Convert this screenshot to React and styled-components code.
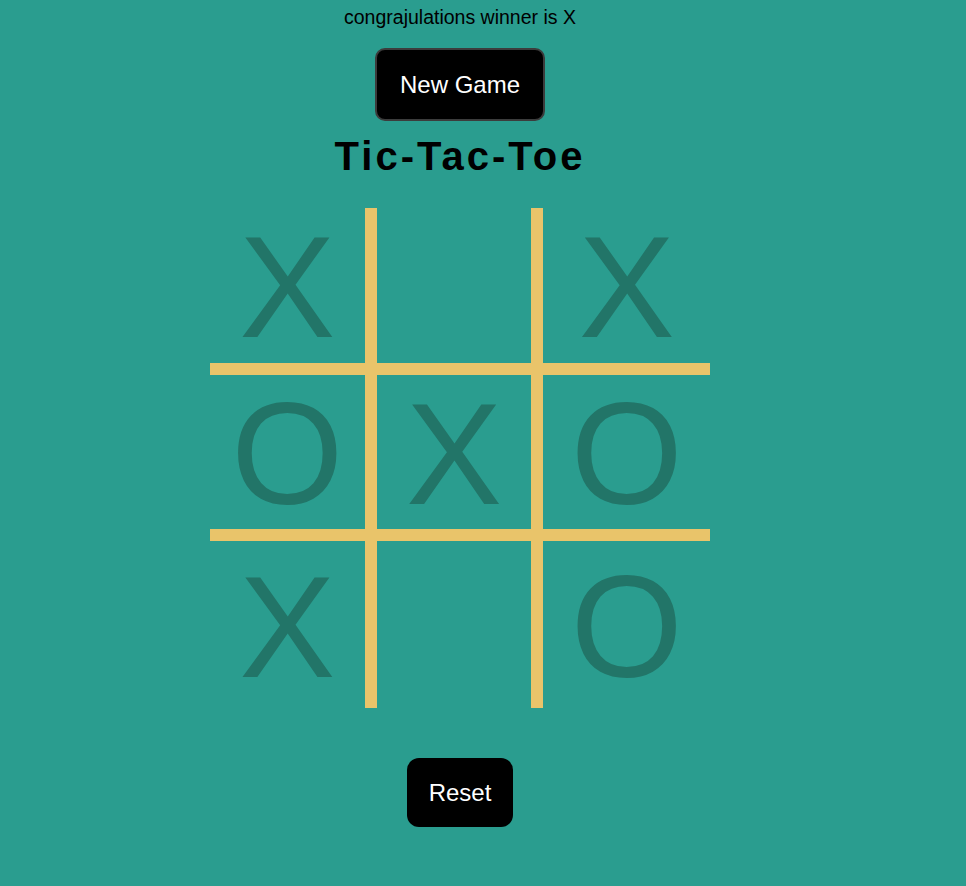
import React, { useState } from "react"
import styled, { createGlobalStyle } from "styled-components"

const GlobalStyle = createGlobalStyle`
  body {
    margin: 0;
    background: #2a9d8f;
    font-family: "Liberation Sans", Arial, sans-serif;
  }
`

// Whole page column, content centred
const Page = styled.main`
  width: 920px;
  min-height: 886px;
  display: flex;
  flex-direction: column;
  align-items: center;
`

const Message = styled.p`
  margin: 0;
  padding-top: 5px;
  font-family: "Comic Sans MS", "Liberation Sans", sans-serif;
  font-size: 19.5px;
  line-height: 25px;
  color: #000;
`

const Button = styled.button`
  margin-top: ${({ $top }) => $top}px;
  width: ${({ $w }) => $w}px;
  height: ${({ $h }) => $h}px;
  background: #000;
  color: #fff;
  border: ${({ $outlined }) => ($outlined ? "2px solid #3c3c3c" : "none")};
  border-radius: ${({ $radius }) => $radius}px;
  font-family: "Liberation Sans", Arial, sans-serif;
  font-size: 24px;
  cursor: pointer;
`

const Title = styled.h1`
  margin: 10px 0 0;
  font-family: "Comic Sans MS", "Liberation Sans", sans-serif;
  font-size: 40px;
  line-height: 50px;
  letter-spacing: 3px;
  font-weight: 700;
  color: #000;
`

const Board = styled.div`
  margin-top: 27px;
  width: 500px;
  height: 500px;
  display: grid;
  grid-template-columns: repeat(3, 1fr);
  grid-template-rows: repeat(3, 1fr);
`

const Cell = styled.div`
  box-sizing: border-box;
  display: flex;
  align-items: center;
  justify-content: center;
  border-right: ${({ $right }) => ($right ? "12px solid #e9c46a" : "none")};
  border-bottom: ${({ $bottom }) => ($bottom ? "12px solid #e9c46a" : "none")};
  font-family: "Liberation Sans", Arial, sans-serif;
  font-size: 144px;
  line-height: 1;
  color: #227568;
  padding-top: 6px;
  cursor: pointer;
`

const start = ["X", "", "X", "O", "X", "O", "X", "", "O"]

const App = () => {
  const [cells, setCells] = useState(start)

  return (
    <>
      <GlobalStyle />
      <Page>
        <Message>congrajulations winner is X</Message>
        <Button $top={18} $w={170} $h={73} $radius={10} $outlined onClick={() => setCells(Array(9).fill(""))}>
          New Game
        </Button>
        <Title>Tic-Tac-Toe</Title>
        <Board>
          {cells.map((v, i) => (
            <Cell key={i} $right={i % 3 !== 2} $bottom={i < 6}>
              {v}
            </Cell>
          ))}
        </Board>
        <Button $top={50} $w={106} $h={69} $radius={12} onClick={() => setCells(Array(9).fill(""))}>
          Reset
        </Button>
      </Page>
    </>
  )
}

export default App
